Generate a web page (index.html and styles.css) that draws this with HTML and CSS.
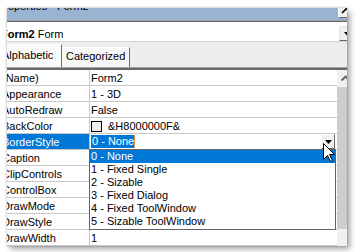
FILE: index.html
```html
<!DOCTYPE html>
<html>
<head>
<meta charset="utf-8">
<link rel="stylesheet" href="styles.css">
</head>
<body>
<div class="shot">
  <div class="frame">
    <div class="win">
      <div class="titlebar">
        <span class="title">Properties - Form2</span>
        <span class="closebtn"><svg width="14" height="12" viewBox="0 0 14 12"><path d="M3 -1 L12 8 M12 -1 L3 8" stroke="#000" stroke-width="1.6" fill="none"/></svg></span>
      </div>
      <div class="sep1"></div>
      <div class="combo">
        <span class="combo-text"><b>Form2</b> Form</span>
        <span class="combo-btn"><svg width="7" height="4" viewBox="0 0 7 4"><polygon points="0,0 7,0 3.5,4" fill="#000"/></svg></span>
      </div>
      <div class="tabs">
        <div class="tab active">Alphabetic</div>
        <div class="tab">Categorized</div>
      </div>
      <div class="sep2"></div>
      <div class="pane">
        <div class="grid">
          <div class="row"><div class="name">(Name)</div><div class="val">Form2</div></div>
          <div class="row"><div class="name">Appearance</div><div class="val">1 - 3D</div></div>
          <div class="row"><div class="name">AutoRedraw</div><div class="val">False</div></div>
          <div class="row"><div class="name">BackColor</div><div class="val"><span class="swatch"></span><span class="code">&amp;H8000000F&amp;</span></div></div>
          <div class="row"><div class="name selected">BorderStyle</div><div class="val edit"><span class="seltext">0 - None</span><span class="dd-btn"><svg width="7" height="4" viewBox="0 0 7 4"><polygon points="0,0 7,0 3.5,4" fill="#000"/></svg></span></div></div>
          <div class="row"><div class="name">Caption</div><div class="val"></div></div>
          <div class="row"><div class="name">ClipControls</div><div class="val"></div></div>
          <div class="row"><div class="name">ControlBox</div><div class="val"></div></div>
          <div class="row"><div class="name">DrawMode</div><div class="val"></div></div>
          <div class="row"><div class="name">DrawStyle</div><div class="val"></div></div>
          <div class="row"><div class="name">DrawWidth</div><div class="val">1</div></div>
        </div>
        <div class="scroll">
          <div class="sb-up"><svg width="17" height="17" viewBox="0 0 17 17"><polyline points="4.5,10.5 8.5,6.5 12.5,10.5" stroke="#606060" stroke-width="1.8" fill="none"/></svg></div>
          <div class="sb-thumb"></div>
          <div class="sb-track"></div>
        </div>
      </div>
    </div>
    <div class="droplist">
      <div class="item on">0 - None</div>
      <div class="item">1 - Fixed Single</div>
      <div class="item">2 - Sizable</div>
      <div class="item">3 - Fixed Dialog</div>
      <div class="item">4 - Fixed ToolWindow</div>
      <div class="item">5 - Sizable ToolWindow</div>
    </div>
    <svg class="cursor" width="13" height="20" viewBox="0 0 13 20"><polygon points="0.5,0.5 0.5,16.5 4.5,12.5 7.5,18.5 9.5,17.5 6.5,11.5 11.5,11.5" fill="#fff" stroke="#000" stroke-width="1" stroke-linejoin="miter"/></svg>
  </div>
</div>
</body>
</html>
```

FILE: styles.css
```css
* { box-sizing: border-box; }
html, body { margin: 0; padding: 0; }
body {
  width: 356px;
  height: 252px;
  overflow: hidden;
  background: #fff;
  font-family: "Liberation Sans", Arial, sans-serif;
  font-size: 11px;
  color: #000;
}
.shot { padding: 8px 0 0 7px; }
.frame {
  position: relative;
  width: 340px;
  height: 238px;
  overflow: hidden;
  background: #fff;
  box-shadow: 0 0 2px rgba(0,0,0,0.3), 3px 3px 6px rgba(0,0,0,0.35);
}
.win {
  width: 355px;
  margin-left: -8px;
  display: flex;
  flex-direction: column;
}
.titlebar {
  height: 12px;
  background: #99b4d1;
  display: flex;
  justify-content: space-between;
  overflow: hidden;
}
.title {
  margin-top: -8px;
  margin-left: -2px;
  line-height: 13px;
  white-space: nowrap;
}
.closebtn {
  width: 16px;
  height: 14px;
  margin-top: -4px;
  background: #f0f0f0;
  border: 1px solid;
  border-color: #fff #696969 #696969 #fff;
  display: block;
}
.closebtn svg { display: block; }
.sep1 {
  height: 2px;
  border-top: 1px solid #a0a0a0;
  border-bottom: 1px solid #696969;
}
.combo {
  height: 20px;
  background: #fff;
  border-bottom: 1px solid #d4d4d4;
  display: flex;
  justify-content: space-between;
}
.combo-text {
  padding: 6px 0 0 2px;
  line-height: 13px;
  white-space: nowrap;
}
.combo-text b { font-weight: bold; }
.combo-btn {
  width: 16px;
  height: 15px;
  margin-top: 4px;
  margin-right: -1px;
  background: #f0f0f0;
  border: 1px solid;
  border-color: #e3e3e3 #696969 #696969 #e3e3e3;
  display: flex;
  align-items: center;
  justify-content: center;
}
.combo-btn svg, .dd-btn svg { display: block; }
.tabs {
  height: 25px;
  background: #ededed;
  display: flex;
  align-items: flex-end;
}
.tab {
  height: 20px;
  padding: 2px 0 0 3px;
  width: 68px;
  background: #f7f7f7;
  border-top: 1px solid #fff;
  border-left: 1px solid #fff;
  border-right: 1px solid #696969;
  line-height: 13px;
  white-space: nowrap;
}
.tab.active {
  width: 63px;
  height: 23px;
  padding: 4px 0 0 3px;
  border-left: none;
  background: #fafafa;
}
.sep2 {
  height: 3px;
  border-top: 1px solid #a0a0a0;
  background: #696969;
}
.pane {
  display: flex;
  height: 176px;
}
.grid {
  width: 338px;
  display: flex;
  flex-direction: column;
}
.row {
  height: 16px;
  display: grid;
  grid-template-columns: 91px 1fr;
  border-bottom: 1px solid #c8c8c8;
}
.name {
  border-right: 1px solid #c8c8c8;
  padding: 1px 0 0 3px;
  line-height: 14px;
  white-space: nowrap;
  overflow: hidden;
}
.name.selected {
  background: #0078d7;
  color: #fff;
}
.val {
  padding: 1px 0 0 1px;
  line-height: 14px;
  white-space: nowrap;
  display: flex;
  align-items: flex-start;
}
.swatch {
  width: 11px;
  height: 11px;
  margin-top: 2px;
  border: 1px solid #000;
  background: #f0f0f0;
  flex: none;
}
.code { margin-left: 6px; }
.val.edit {
  padding: 0 2px 0 1px;
  justify-content: space-between;
}
.seltext {
  margin-top: 1px;
  height: 13px;
  line-height: 13px;
  padding-left: 1px;
  background: #0078d7;
  color: #fff;
  border-right: 1px solid #e0904a;
}
.dd-btn {
  width: 14px;
  height: 15px;
  background: #f0f0f0;
  border: 1px solid;
  border-color: #fff #696969 #696969 #fff;
  display: flex;
  align-items: center;
  justify-content: center;
}
.scroll {
  width: 17px;
  display: flex;
  flex-direction: column;
}
.sb-up { height: 17px; background: #f0f0f0; }
.sb-up svg { display: block; }
.sb-thumb { height: 142px; background: #cdcdcd; }
.sb-track { flex: 1; background: #f0f0f0; }
.droplist {
  position: absolute;
  left: 82px;
  top: 141px;
  width: 247px;
  height: 81px;
  background: #fff;
  border: 1px solid #646464;
  padding-bottom: 1px;
}
.item {
  height: 13px;
  line-height: 13px;
  padding-left: 1px;
  white-space: nowrap;
}
.item.on {
  background: #0078d7;
  color: #fff;
}
.cursor {
  position: absolute;
  left: 316px;
  top: 135px;
}
```
